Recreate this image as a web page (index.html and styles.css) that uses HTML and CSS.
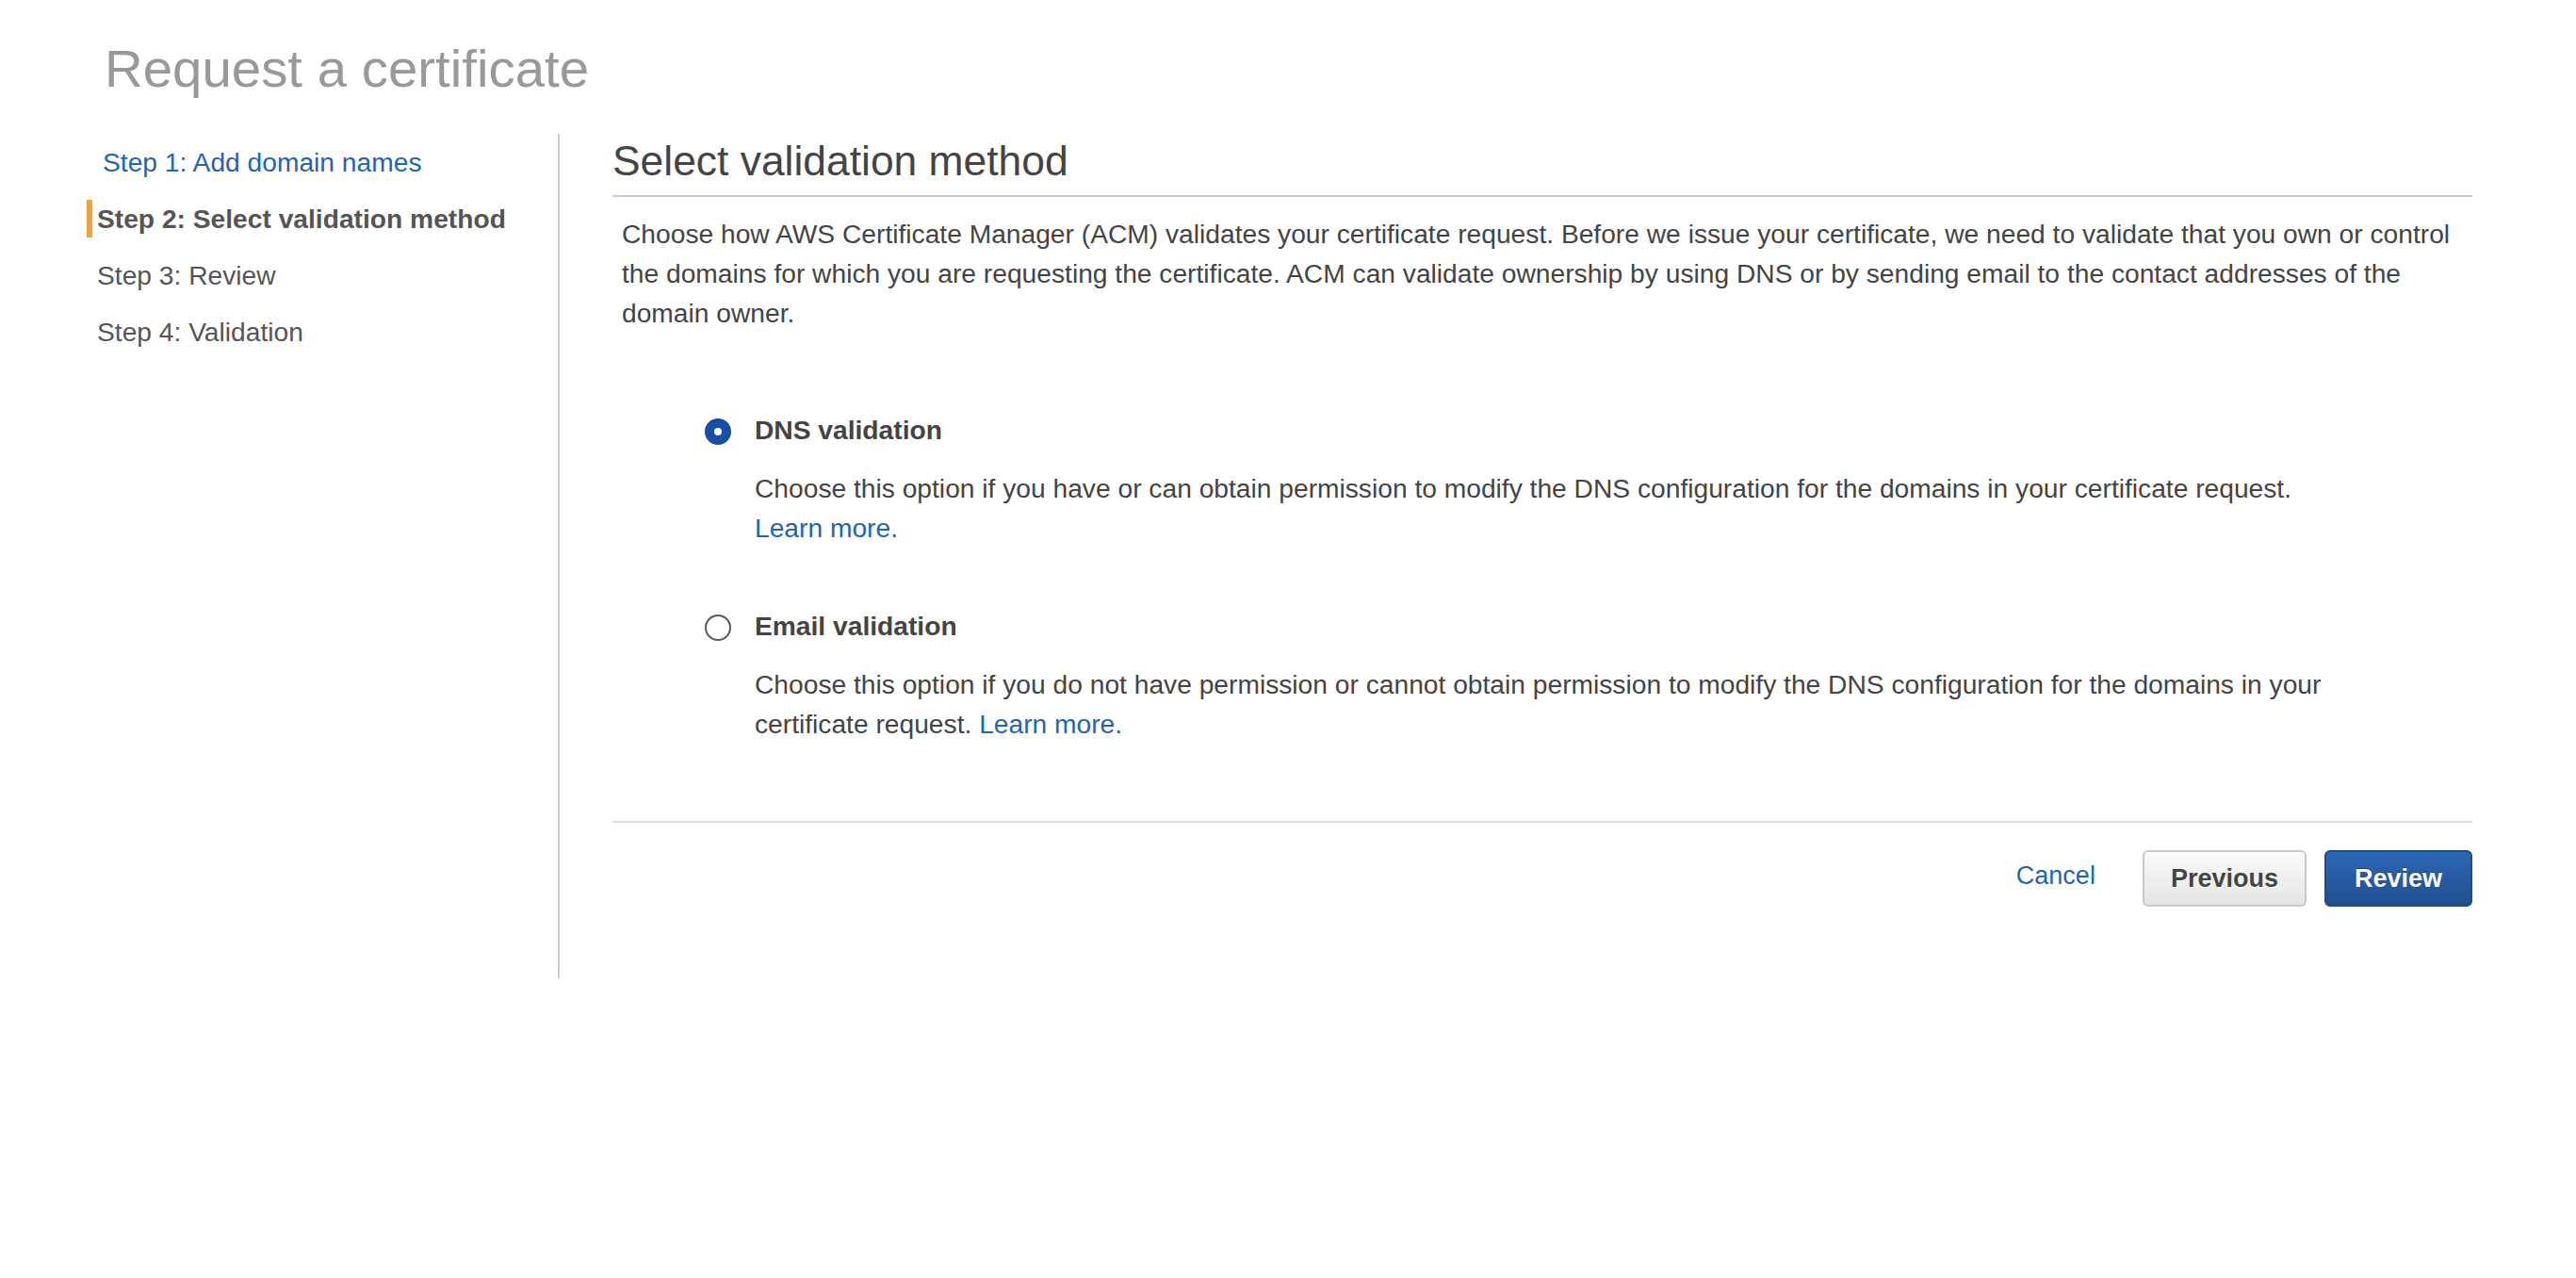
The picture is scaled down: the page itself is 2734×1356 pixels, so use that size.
FILE: index.html
```html
<!DOCTYPE html>
<html lang="en">
<head>
<meta charset="utf-8">
<title>Request a certificate</title>
<link rel="stylesheet" href="styles.css">
</head>
<body>
<div class="page">
  <h1 class="page-title">Request a certificate</h1>
  <div class="wizard">
    <nav class="steps">
      <a class="step step-link" href="#">Step 1: Add domain names</a>
      <div class="step step-active">Step 2: Select validation method</div>
      <div class="step">Step 3: Review</div>
      <div class="step">Step 4: Validation</div>
    </nav>
    <main class="panel">
      <h2 class="panel-title">Select validation method</h2>
      <p class="intro">Choose how AWS Certificate Manager (ACM) validates your certificate request. Before we issue your certificate, we need to validate that you own or control the domains for which you are requesting the certificate. ACM can validate ownership by using DNS or by sending email to the contact addresses of the domain owner.</p>
      <div class="options">
        <div class="option">
          <span class="radio radio-checked"></span>
          <div class="option-body">
            <div class="option-title">DNS validation</div>
            <div class="option-desc">Choose this option if you have or can obtain permission to modify the DNS configuration for the domains in your certificate request.<br><a class="link" href="#">Learn more.</a></div>
          </div>
        </div>
        <div class="option option-second">
          <span class="radio"></span>
          <div class="option-body">
            <div class="option-title">Email validation</div>
            <div class="option-desc">Choose this option if you do not have permission or cannot obtain permission to modify the DNS configuration for the domains in your certificate request. <a class="link" href="#">Learn more.</a></div>
          </div>
        </div>
      </div>
      <div class="footer">
        <a class="cancel" href="#">Cancel</a>
        <button class="btn btn-secondary" type="button">Previous</button>
        <button class="btn btn-primary" type="button">Review</button>
      </div>
    </main>
  </div>
</div>
</body>
</html>
```
FILE: styles.css
```css
* {
  box-sizing: border-box;
}

html, body {
  margin: 0;
  padding: 0;
  background: #ffffff;
}

body {
  font-family: "Liberation Sans", Arial, Helvetica, sans-serif;
  color: #444444;
  font-size: 28.2px;
  line-height: 42px;
}

.page {
  padding-top: 41px;
}

.page-title {
  margin: 0;
  padding-left: 111px;
  font-size: 56.4px;
  line-height: 64px;
  font-weight: normal;
  color: #999999;
}

.wizard {
  display: flex;
  align-items: flex-start;
  margin-top: 37px;
  padding-right: 110px;
}

.steps {
  flex: 0 0 594px;
  min-height: 896px;
  padding-top: 10px;
  padding-left: 92px;
  border-right: 2px solid #cccccc;
  display: flex;
  flex-direction: column;
  align-items: flex-start;
  gap: 20px;
}

.step {
  display: block;
  font-size: 28.2px;
  line-height: 40px;
  color: #555555;
  border-left: 6px solid transparent;
  padding-left: 5px;
  text-decoration: none;
}

.step-link {
  color: #2263b5;
  padding-left: 11px;
}

.step-active {
  font-weight: bold;
  border-left-color: #f3a33d;
}

.panel {
  flex: 1;
  margin-left: 56px;
}

.panel-title {
  margin: 0;
  padding-top: 1px;
  padding-bottom: 8px;
  font-size: 44.4px;
  line-height: 56px;
  font-weight: normal;
  color: #444444;
  border-bottom: 2px solid #cccccc;
}

.intro {
  margin: 18px 0 0;
  padding-left: 10px;
}

.options {
  margin-top: 82px;
}

.option {
  display: flex;
  align-items: flex-start;
  padding-left: 98px;
}

.option-second {
  margin-top: 62px;
}

.radio {
  flex: 0 0 28px;
  width: 28px;
  height: 28px;
  margin-top: 9px;
  margin-right: 25px;
  border-radius: 50%;
  border: 2px solid #5a5a5a;
  background: #ffffff;
  display: flex;
  align-items: center;
  justify-content: center;
}

.radio-checked {
  border-color: #1a4ea6;
  background: #1a4ea6;
}

.radio-checked::after {
  content: "";
  width: 8px;
  height: 8px;
  border-radius: 50%;
  background: #ffffff;
}

.option-body {
  width: 1720px;
}

.option-title {
  font-weight: bold;
  color: #444444;
}

.option-desc {
  margin-top: 20px;
}

.link {
  color: #2263b5;
  text-decoration: none;
}

.footer {
  margin-top: 82px;
  border-top: 2px solid #dddddd;
  padding-top: 29px;
  display: flex;
  justify-content: flex-end;
  align-items: center;
}

.cancel {
  font-size: 27px;
  line-height: 40px;
  color: #2263b5;
  text-decoration: none;
  margin-right: 50px;
  margin-bottom: 6px;
}

.btn {
  font-family: "Liberation Sans", Arial, Helvetica, sans-serif;
  font-size: 27px;
  font-weight: bold;
  height: 60px;
  padding: 0 28px;
  border-radius: 6px;
  border: 2px solid;
  line-height: 56px;
}

.btn-secondary {
  color: #444444;
  border-color: #c9c9c9;
  background: linear-gradient(#fbfbfb, #e4e4e4);
  text-shadow: 0 1px 0 #ffffff;
}

.btn-primary {
  margin-left: 19px;
  padding: 0 30px;
  color: #ffffff;
  border-color: #1f4c88;
  background: linear-gradient(#2c67b4, #204f90);
  text-shadow: 0 -1px 0 rgba(0, 0, 0, 0.35);
}
```
